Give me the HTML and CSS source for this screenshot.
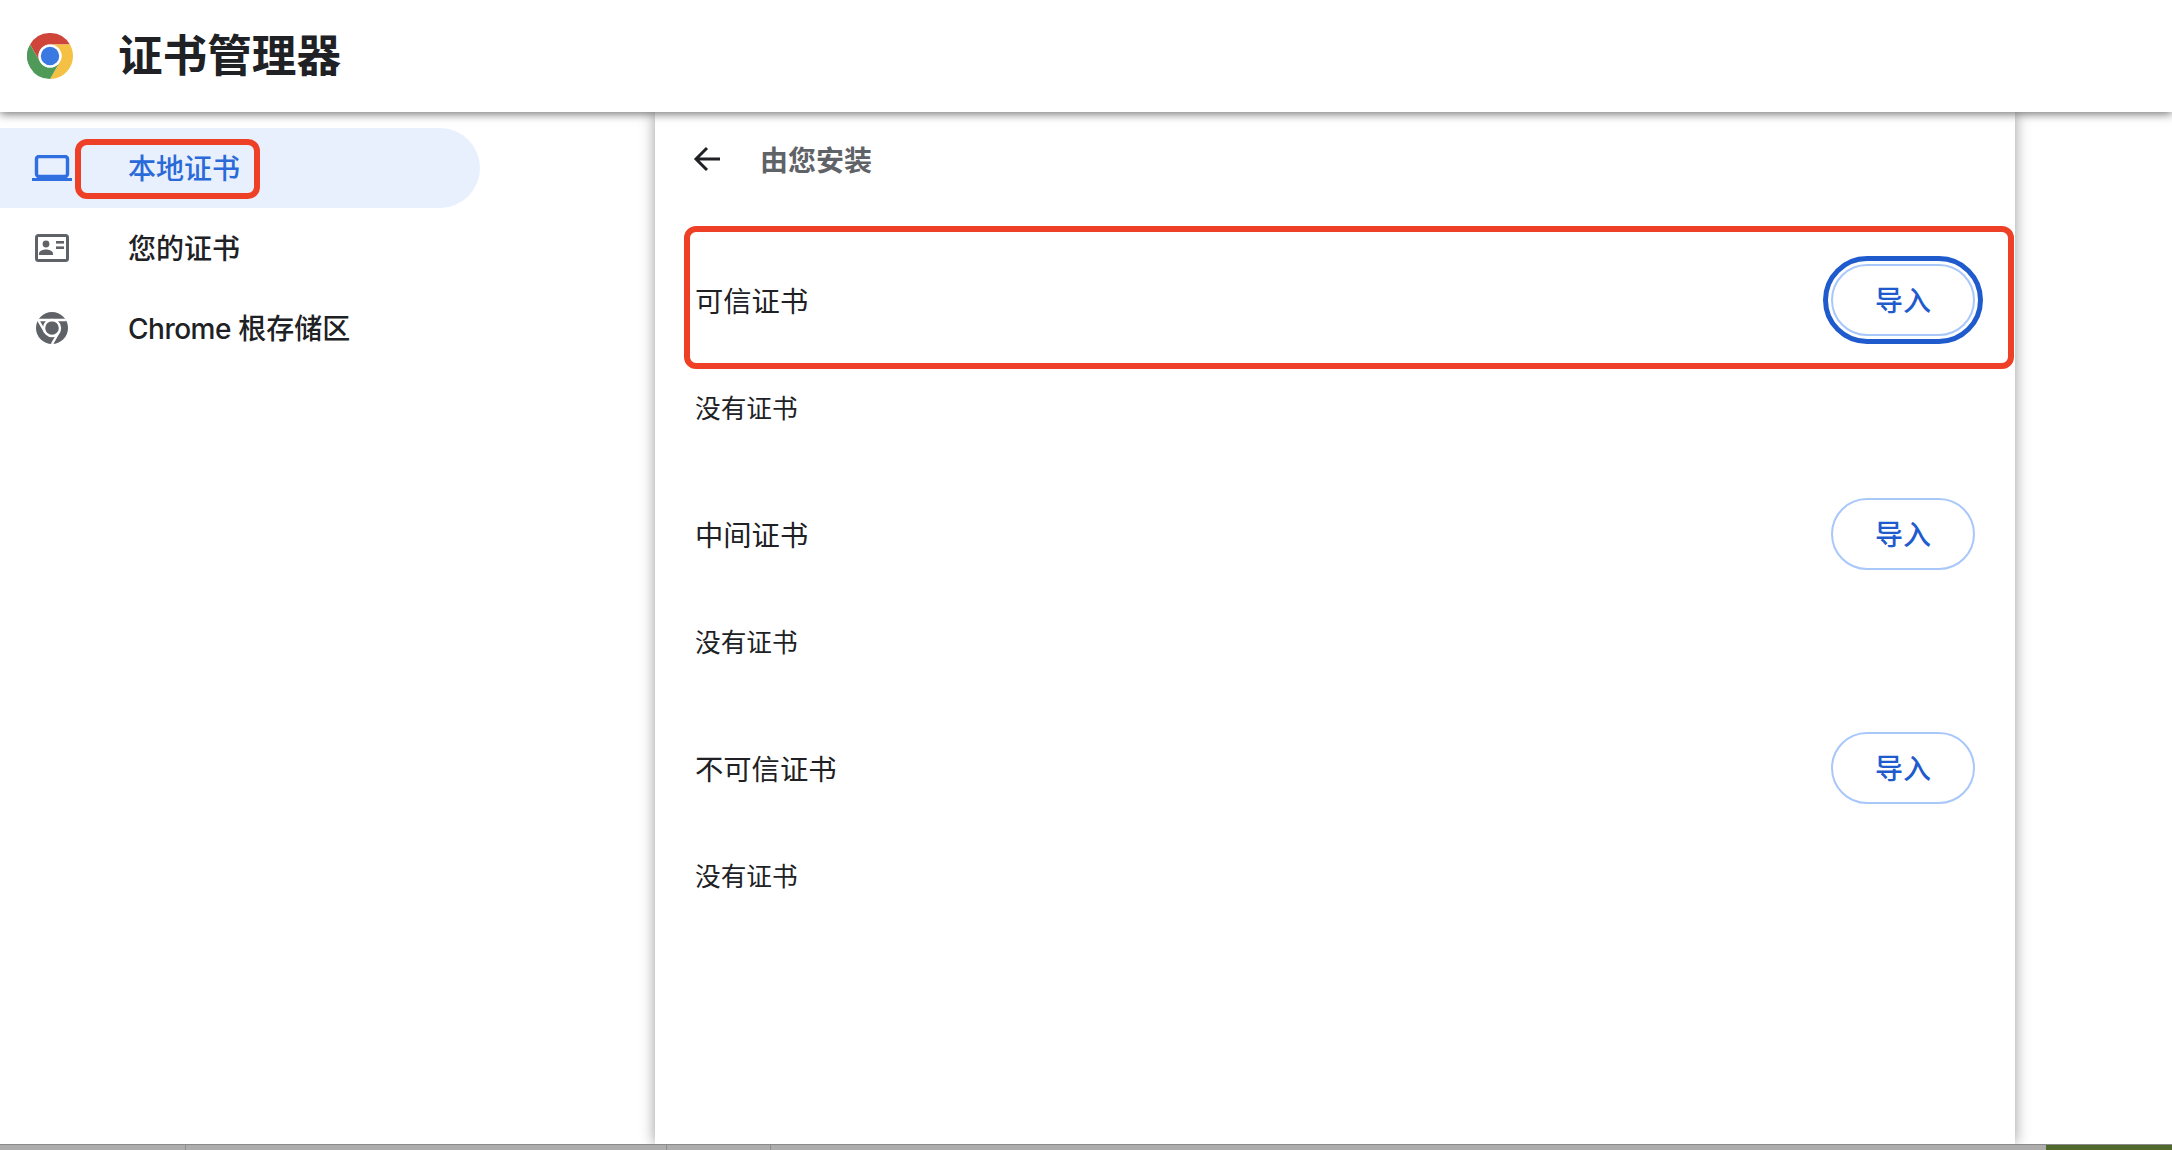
FILE: index.html
```html
<!DOCTYPE html>
<html lang="zh-CN">
<head>
    <meta charset="UTF-8">
    <meta name="viewport" content="width=device-width, initial-scale=1.0">
    <title>证书管理器</title>
    <link rel="stylesheet" href="styles.css">
</head>

<body>
    <header class="topbar">
        <svg class="logo" viewBox="0 0 48 48">
            <path fill="#d0453a" d="M3.2 12A24 24 0 0 1 44.78 12H24A12 12 0 0 0 13.6 30Z"/>
            <path fill="#f4c145" d="M44.78 12A24 24 0 0 1 24 48L34.4 30A12 12 0 0 0 24 12Z"/>
            <path fill="#4f9a58" d="M24 48A24 24 0 0 1 3.2 12L13.6 30A12 12 0 0 0 34.4 30Z"/>
            <circle cx="24" cy="24" r="12" fill="#fff"/>
            <circle cx="24" cy="24" r="9.6" fill="#3a78e2"/>
        </svg>
        <h1 class="title">证书管理器</h1>
    </header>

    <div class="content">
        <nav class="sidebar">
            <a href="javascript:;" class="navitem active">
                <svg class="navicon" viewBox="0 0 40 26">
                    <rect x="4.5" y="1.5" width="31" height="20" rx="2.5" fill="none" stroke="#2f6fe0" stroke-width="3.4"/>
                    <rect x="0" y="23" width="40" height="3" fill="#2f6fe0"/>
                </svg>
                <span class="navlabel">本地证书</span>
                <i class="mark markitem"></i>
            </a>
            <a href="javascript:;" class="navitem">
                <svg class="navicon" viewBox="0 0 40 28">
                    <rect x="4.5" y="1.5" width="31" height="25" rx="2" fill="#fff" stroke="#5f6368" stroke-width="3"/>
                    <circle cx="14" cy="10" r="3.4" fill="#5f6368"/>
                    <path fill="#5f6368" d="M7 21v-1.6c0-2.600 4.500-4 7-4s7 1.400 7 4V21Z"/>
                    <rect x="24" y="7" width="8" height="2.600" fill="#5f6368"/>
                    <rect x="24" y="12.400" width="8" height="2.600" fill="#5f6368"/>
                </svg>
                <span class="navlabel">您的证书</span>
            </a>
            <a href="javascript:;" class="navitem">
                <svg class="navicon" viewBox="0 0 40 32">
                    <circle cx="20" cy="16" r="16" fill="#5f6368"/>
                    <g stroke="#fff" stroke-width="2.400" fill="none">
                        <path d="M6.100 8H20M6.100 8l6.900 12M20 32l6.900-12M33.900 8H20"/>
                        <circle cx="20" cy="16" r="8"/>
                    </g>
                    <circle cx="20" cy="16" r="6" fill="#5f6368"/>
                </svg>
                <span class="navlabel"><span class="navlatin">Chrome</span> 根存储区</span>
            </a>
        </nav>

        <main class="panel">
            <div class="backrow">
                <svg class="backicon" viewBox="0 0 28 26">
                    <path d="M27 13H3M14 2 3 13l11 11" fill="none" stroke="#202124" stroke-width="3"/>
                </svg>
                <h2 class="subtitle">由您安装</h2>
            </div>

            <section class="group">
                <div class="grouprow">
                    <h3 class="grouptitle">可信证书</h3>
                    <button class="importbtn focused">导入</button>
                </div>
                <p class="empty">没有证书</p>
                <i class="mark markrow"></i>
            </section>
            <section class="group">
                <div class="grouprow">
                    <h3 class="grouptitle">中间证书</h3>
                    <button class="importbtn">导入</button>
                </div>
                <p class="empty">没有证书</p>
            </section>
            <section class="group">
                <div class="grouprow">
                    <h3 class="grouptitle">不可信证书</h3>
                    <button class="importbtn">导入</button>
                </div>
                <p class="empty">没有证书</p>
            </section>
        </main>

        <div class="rest"></div>
    </div>

    <footer class="desktop">
        <div class="desktopgrey"></div>
        <div class="desktopgreen"></div>
    </footer>
</body>

</html>
```

FILE: styles.css
```css
* {
    margin: 0;
    padding: 0;
    box-sizing: border-box;
}

html,
body {
    height: 100%;
}

body {
    display: flex;
    flex-direction: column;
    overflow: hidden;
    background-color: #fff;
    color: #202124;
    font-family: Inter, "Noto Sans CJK SC", sans-serif;
}

/* top bar */
.topbar {
    display: flex;
    align-items: center;
    flex: 0 0 112px;
    padding-left: 27px;
    background-color: #fff;
    box-shadow: 0 2px 9px rgba(0, 0, 0, .55);
    position: relative;
    z-index: 2;
}

.logo {
    width: 46px;
    height: 46px;
}

.title {
    margin-left: 45px;
    font-size: 44.6px;
    font-weight: 700;
    line-height: 56px;
}

.content {
    display: flex;
    flex: 1;
    min-height: 0;
}

/* left nav */
.sidebar {
    flex: 0 0 655px;
    padding-top: 16px;
}

.navitem {
    display: flex;
    align-items: center;
    width: 480px;
    height: 80px;
    padding-left: 32px;
    border-radius: 0 40px 40px 0;
    color: #202124;
    font-size: 28px;
    font-weight: 500;
    text-decoration: none;
    position: relative;
}

.navitem.active {
    background-color: #e8effd;
    color: #2a6ad8;
}

.navlabel {
    padding-bottom: 2px;
}

.navlatin {
    letter-spacing: -.5px;
}

.navicon {
    flex: 0 0 40px;
    width: 40px;
    margin-right: 56px;
}

/* panel */
.panel {
    flex: 0 0 1360px;
    padding: 0 40px;
    background-color: #fff;
    box-shadow: 0 0 14px rgba(0, 0, 0, .4);
    position: relative;
    z-index: 1;
}

.backrow {
    display: flex;
    align-items: center;
    height: 94px;
    margin-bottom: 58px;
}

.backicon {
    width: 28px;
    height: 26px;
    margin-left: -2px;
    margin-right: 39px;
}

.subtitle {
    color: #5f6368;
    font-size: 28px;
    font-weight: 700;
}

.group {
    margin-bottom: 71px;
    position: relative;
}

.grouprow {
    display: flex;
    align-items: center;
    justify-content: space-between;
}

.grouptitle {
    padding-bottom: 2px;
    font-size: 28.3px;
    font-weight: 400;
}

.importbtn {
    width: 144px;
    height: 72px;
    padding-bottom: 2px;
    border: 2px solid #a8c7fa;
    border-radius: 36px;
    background-color: #fff;
    color: #1f5bcc;
    font-family: inherit;
    font-size: 28px;
    font-weight: 500;
}

.importbtn.focused {
    outline: 5px solid #1f5bcc;
    outline-offset: 3px;
}

.empty {
    margin-top: 55px;
    font-size: 25.7px;
    line-height: 36px;
}

.rest {
    flex: 1;
}

/* red annotation boxes */
.mark {
    display: block;
    border: 6px solid #ee4027;
    border-radius: 12px;
    position: absolute;
    pointer-events: none;
}

.markitem {
    left: 75px;
    top: 11px;
    width: 185px;
    height: 60px;
}

.markrow {
    left: -11px;
    top: -38px;
    width: 1330px;
    height: 143px;
}

/* desktop showing under the window */
.desktop {
    display: flex;
    flex: 0 0 6px;
    border-top: 1px solid #8a8a8a;
    position: relative;
    z-index: 3;
}

.desktopgrey {
    flex: 1;
    background-color: #adadad;
    background-image:
        linear-gradient(#8e8e8e, #8e8e8e),
        linear-gradient(#8e8e8e, #8e8e8e),
        linear-gradient(#8e8e8e, #8e8e8e);
    background-position: 185px 0, 666px 0, 770px 0;
    background-size: 1px 100%;
    background-repeat: no-repeat;
}

.desktopgreen {
    flex: 0 0 126px;
    background-color: #4f6a2c;
}
```
